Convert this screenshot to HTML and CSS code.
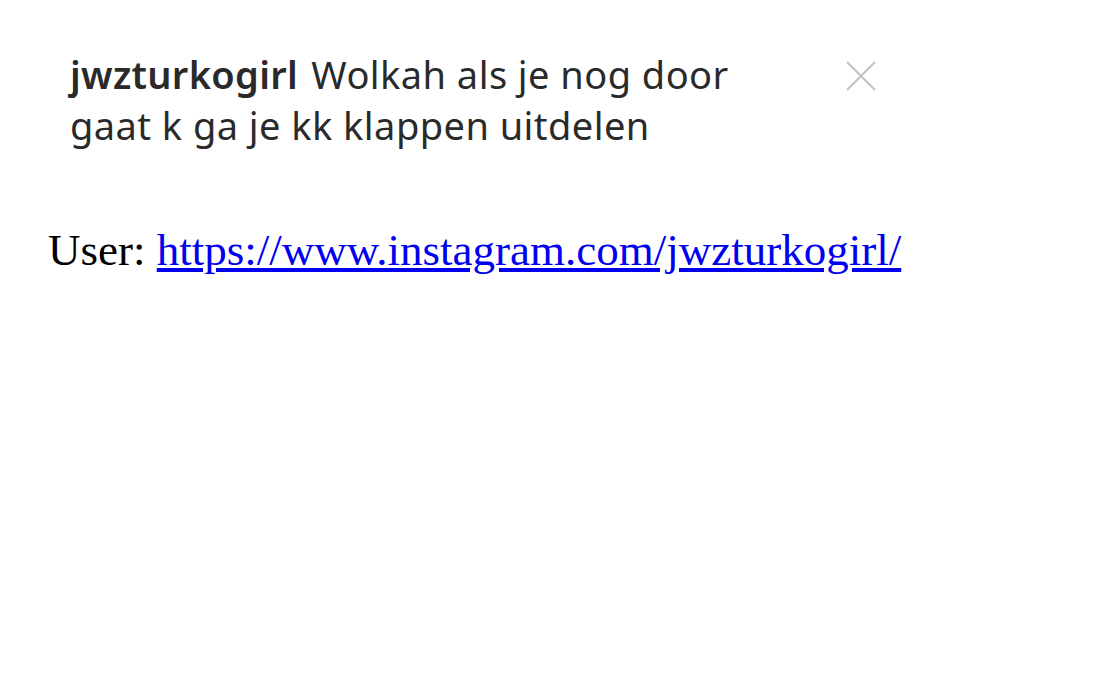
FILE: index.html
```html
<!DOCTYPE html>
<html>
<head>
<meta charset="utf-8">
<link rel="stylesheet" href="styles.css">
</head>
<body>
<div class="shot">
  <p class="comment"><span class="user">jwzturkogirl</span> Wolkah als je nog door gaat k ga je kk klappen uitdelen</p>
  <svg class="close" viewBox="0 0 32 32" width="32" height="32"><path d="M2 2 L30 30 M30 2 L2 30" stroke="#c4c4c4" stroke-width="2.2" fill="none"/></svg>
</div>
<p class="line">User: <a href="https://www.instagram.com/jwzturkogirl/">https://www.instagram.com/jwzturkogirl/</a></p>
</body>
</html>
```
FILE: styles.css
```css
body {
  margin: 0;
  background: #fff;
  font-family: "Liberation Serif", serif;
}
.shot {
  display: flex;
  align-items: flex-start;
  padding: 49px 0 0 70px;
  width: 900px;
  box-sizing: border-box;
}
.comment {
  margin: 0;
  width: 700px;
  font-family: "Noto Sans", "Open Sans", sans-serif;
  font-size: 38px;
  line-height: 51px;
  letter-spacing: 0.45px;
  color: #2a2a2a;
}
.user {
  font-weight: 600;
  letter-spacing: 0.3px;
  margin-right: 3px;
}
.close {
  margin: 11px 0 0 75px;
}
.line {
  margin: 73px 0 0 48px;
  font-size: 45px;
  color: #000;
}
.line a {
  color: #0000ee;
}
```
